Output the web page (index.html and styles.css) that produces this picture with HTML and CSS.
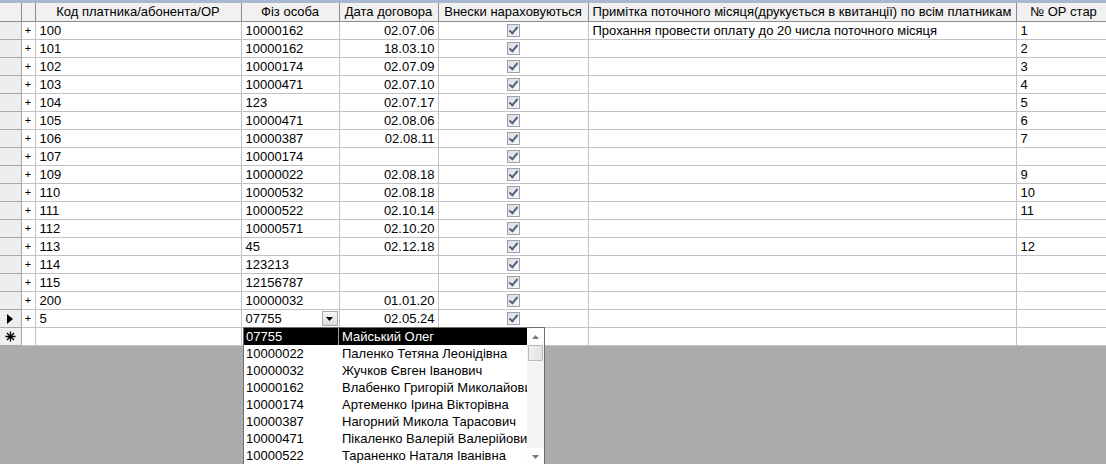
FILE: index.html
```html
<!DOCTYPE html>
<html>
<head>
<meta charset="utf-8">
<link rel="stylesheet" href="styles.css">
</head>
<body>
<div class="topbar"></div>
<table class="grid">
  <colgroup>
    <col class="w-sel"><col class="w-exp"><col class="w-code"><col class="w-fiz"><col class="w-date"><col class="w-vn"><col class="w-note"><col class="w-op">
  </colgroup>
  <thead>
    <tr>
      <th class="sel"></th><th></th><th>Код платника/абонента/ОР</th><th>Фіз особа</th><th>Дата договора</th><th>Внески нараховуються</th><th>Примітка поточного місяця(друкується в квитанції) по всім платникам</th><th>№ ОР стар</th>
    </tr>
  </thead>
  <tbody>
    <tr><td class="sel"></td><td class="exp">+</td><td>100</td><td>10000162</td><td class="date">02.07.06</td><td class="chk"><span class="cb"></span></td><td>Прохання провести оплату до 20 числа поточного місяця</td><td>1</td></tr>
    <tr><td class="sel"></td><td class="exp">+</td><td>101</td><td>10000162</td><td class="date">18.03.10</td><td class="chk"><span class="cb"></span></td><td></td><td>2</td></tr>
    <tr><td class="sel"></td><td class="exp">+</td><td>102</td><td>10000174</td><td class="date">02.07.09</td><td class="chk"><span class="cb"></span></td><td></td><td>3</td></tr>
    <tr><td class="sel"></td><td class="exp">+</td><td>103</td><td>10000471</td><td class="date">02.07.10</td><td class="chk"><span class="cb"></span></td><td></td><td>4</td></tr>
    <tr><td class="sel"></td><td class="exp">+</td><td>104</td><td>123</td><td class="date">02.07.17</td><td class="chk"><span class="cb"></span></td><td></td><td>5</td></tr>
    <tr><td class="sel"></td><td class="exp">+</td><td>105</td><td>10000471</td><td class="date">02.08.06</td><td class="chk"><span class="cb"></span></td><td></td><td>6</td></tr>
    <tr><td class="sel"></td><td class="exp">+</td><td>106</td><td>10000387</td><td class="date">02.08.11</td><td class="chk"><span class="cb"></span></td><td></td><td>7</td></tr>
    <tr><td class="sel"></td><td class="exp">+</td><td>107</td><td>10000174</td><td class="date"></td><td class="chk"><span class="cb"></span></td><td></td><td></td></tr>
    <tr><td class="sel"></td><td class="exp">+</td><td>109</td><td>10000022</td><td class="date">02.08.18</td><td class="chk"><span class="cb"></span></td><td></td><td>9</td></tr>
    <tr><td class="sel"></td><td class="exp">+</td><td>110</td><td>10000532</td><td class="date">02.08.18</td><td class="chk"><span class="cb"></span></td><td></td><td>10</td></tr>
    <tr><td class="sel"></td><td class="exp">+</td><td>111</td><td>10000522</td><td class="date">02.10.14</td><td class="chk"><span class="cb"></span></td><td></td><td>11</td></tr>
    <tr><td class="sel"></td><td class="exp">+</td><td>112</td><td>10000571</td><td class="date">02.10.20</td><td class="chk"><span class="cb"></span></td><td></td><td></td></tr>
    <tr><td class="sel"></td><td class="exp">+</td><td>113</td><td>45</td><td class="date">02.12.18</td><td class="chk"><span class="cb"></span></td><td></td><td>12</td></tr>
    <tr><td class="sel"></td><td class="exp">+</td><td>114</td><td>123213</td><td class="date"></td><td class="chk"><span class="cb"></span></td><td></td><td></td></tr>
    <tr><td class="sel"></td><td class="exp">+</td><td>115</td><td>12156787</td><td class="date"></td><td class="chk"><span class="cb"></span></td><td></td><td></td></tr>
    <tr><td class="sel"></td><td class="exp">+</td><td>200</td><td>10000032</td><td class="date">01.01.20</td><td class="chk"><span class="cb"></span></td><td></td><td></td></tr>
    <tr><td class="sel"><span class="cur"></span></td><td class="exp">+</td><td>5</td><td class="combo"><div class="combo-cell"><span>07755</span><span class="combo-btn"><svg width="7" height="4" viewBox="0 0 7 4"><path d="M0 0H7L3.5 4Z" fill="#000"/></svg></span></div></td><td class="date">02.05.24</td><td class="chk"><span class="cb"></span></td><td></td><td></td></tr>
    <tr><td class="sel star"><svg width="11" height="11" viewBox="0 0 11 11"><path d="M5.5 0.5V10.5M0.5 5.5H10.5M2 2L9 9M9 2L2 9" stroke="#000" stroke-width="1.3"/></svg></td><td></td><td></td><td></td><td></td><td></td><td></td><td></td></tr>
  </tbody>
</table>

<div class="combo-list">
  <div class="list-items">
    <div class="item picked"><span class="c1">07755</span><span class="c2">Майський Олег</span></div>
    <div class="item"><span class="c1">10000022</span><span class="c2">Паленко Тетяна Леонідівна</span></div>
    <div class="item"><span class="c1">10000032</span><span class="c2">Жучков Євген Іванович</span></div>
    <div class="item"><span class="c1">10000162</span><span class="c2">Влабенко Григорій Миколайович</span></div>
    <div class="item"><span class="c1">10000174</span><span class="c2">Артеменко Ірина Вікторівна</span></div>
    <div class="item"><span class="c1">10000387</span><span class="c2">Нагорний Микола Тарасович</span></div>
    <div class="item"><span class="c1">10000471</span><span class="c2">Пікаленко Валерій Валерійович</span></div>
    <div class="item"><span class="c1">10000522</span><span class="c2">Тараненко Наталя Іванівна</span></div>
  </div>
  <div class="vscroll">
    <div class="sbtn"><svg width="7" height="4" viewBox="0 0 7 4"><path d="M0 4H7L3.5 0Z" fill="#7a7a7a"/></svg></div>
    <div class="thumb"></div>
    <div class="track"></div>
    <div class="sbtn"><svg width="7" height="4" viewBox="0 0 7 4"><path d="M0 0H7L3.5 4Z" fill="#7a7a7a"/></svg></div>
  </div>
</div>
</body>
</html>
```

FILE: styles.css
```css
html, body {
  margin: 0;
  padding: 0;
}
body {
  width: 1106px;
  height: 464px;
  overflow: hidden;
  position: relative;
  background: #ababab;
  font-family: "Liberation Sans", Arial, sans-serif;
  font-size: 13px;
  color: #000;
}
.topbar {
  height: 3px;
  background: #a9b8d2;
}
.grid {
  border-collapse: collapse;
  table-layout: fixed;
  width: 1111px;
  background: #fff;
}
.w-sel { width: 21px; }
.w-exp { width: 14px; }
.w-code { width: 206px; }
.w-fiz { width: 98px; }
.w-date { width: 99px; }
.w-vn { width: 150px; }
.w-note { width: 428px; }
.w-op { width: 95px; }

.grid th {
  height: 18px;
  padding: 0;
  background: #f1f1f1;
  font-weight: normal;
  text-align: center;
  border: 1px solid #8c8c8c;
  border-top: none;
  white-space: nowrap;
  overflow: hidden;
  line-height: 18px;
}
.grid th:first-child, .grid td:first-child {
  border-left: none;
}
.grid td {
  height: 17px;
  padding: 0 3px 0 4px;
  border: 1px solid #c3c3c3;
  white-space: nowrap;
  overflow: hidden;
  line-height: 17px;
}
.grid td.sel {
  background: #eeeeee;
  border-color: #a9a9a9;
  padding: 0;
  text-align: center;
}
.grid td.exp {
  padding: 0;
  text-align: center;
  font-size: 11px;
}
.grid td.date {
  text-align: right;
  padding-right: 3px;
}
.grid td.chk {
  padding: 0;
  text-align: center;
}
.cb {
  display: inline-block;
  width: 11px;
  height: 11px;
  vertical-align: middle;
  margin-top: -2px;
  border: 1px solid #9aa1ad;
  background: linear-gradient(135deg, #dcdcdc, #f8f8f8);
  position: relative;
}
.cb::after {
  content: "";
  position: absolute;
  left: 3px;
  top: 0px;
  width: 3px;
  height: 7px;
  border: solid #52618a;
  border-width: 0 2px 2px 0;
  transform: rotate(40deg);
}
.cur {
  display: inline-block;
  width: 0;
  height: 0;
  border-top: 5px solid transparent;
  border-bottom: 5px solid transparent;
  border-left: 6px solid #000;
  vertical-align: middle;
  margin-top: -2px;
}
.grid td.star svg {
  display: inline-block;
  vertical-align: middle;
  margin-top: -2px;
}
.grid td.combo {
  padding: 0 1px 0 4px;
}
.combo-cell {
  display: flex;
  align-items: center;
  justify-content: space-between;
  height: 17px;
}
.combo-btn {
  border: 1px solid #a3a8b3;
  background: linear-gradient(#f7f7f7, #dcdcdc);
  display: flex;
  align-items: center;
  justify-content: center;
  box-sizing: border-box;
  width: 16px;
  height: 15px;
}

.combo-list {
  position: absolute;
  left: 243px;
  top: 327px;
  width: 302px;
  height: 139px;
  box-sizing: border-box;
  border: 1px solid #6e6e6e;
  background: #fff;
  display: flex;
}
.list-items {
  flex: 1;
  overflow: hidden;
}
.item {
  display: flex;
  height: 17px;
  line-height: 17px;
  white-space: nowrap;
}
.item .c1 {
  width: 92px;
  padding-left: 2px;
  border-right: 1px solid transparent;
  flex: none;
}
.item .c2 {
  flex: 1;
  padding-left: 3px;
  overflow: hidden;
}
.item.picked {
  background: #000;
  color: #fff;
}
.item.picked .c1 {
  border-right-color: #9a9a9a;
}
.vscroll {
  width: 17px;
  display: flex;
  flex-direction: column;
  background: #f4f4f4;
}
.sbtn {
  height: 17px;
  flex: none;
  display: flex;
  align-items: center;
  justify-content: center;
  background: #fdfdfd;
}
.thumb {
  height: 16px;
  flex: none;
  box-sizing: border-box;
  border: 1px solid #b9b9b9;
  border-radius: 1px;
  background: linear-gradient(90deg, #f0f0f0, #e2e2e2);
  margin: 0 1px 0 1px;
}
.track {
  flex: 1;
}
```
